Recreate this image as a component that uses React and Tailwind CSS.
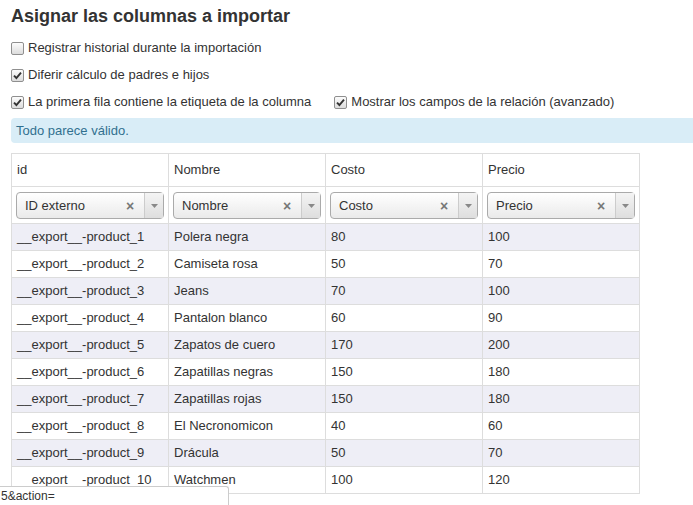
import React from "react";

const rows = [
  ["__export__-product_1", "Polera negra", "80", "100"],
  ["__export__-product_2", "Camiseta rosa", "50", "70"],
  ["__export__-product_3", "Jeans", "70", "100"],
  ["__export__-product_4", "Pantalon blanco", "60", "90"],
  ["__export__-product_5", "Zapatos de cuero", "170", "200"],
  ["__export__-product_6", "Zapatillas negras", "150", "180"],
  ["__export__-product_7", "Zapatillas rojas", "150", "180"],
  ["__export__-product_8", "El Necronomicon", "40", "60"],
  ["__export__-product_9", "Drácula", "50", "70"],
  ["__export__-product_10", "Watchmen", "100", "120"],
];

const Check = ({ checked }) => (
  <span className="inline-flex w-[13px] h-[13px] shrink-0 items-center justify-center rounded-[2px] border border-[#8f8f8f] bg-gradient-to-b from-[#fcfcfc] to-[#dcdcdc]">
    {checked && (
      <svg width="9" height="9" viewBox="0 0 9 9">
        <path d="M1 4.6 L3.4 7 L8 1.6" fill="none" stroke="#333" strokeWidth="1.9" />
      </svg>
    )}
  </span>
);

const Option = ({ checked, label }) => (
  <label className="flex items-center gap-[4px]">
    <Check checked={checked} />
    <span>{label}</span>
  </label>
);

const Select = ({ value }) => (
  <div className="flex h-[27px] items-stretch rounded-[4px] border border-[#aaa] bg-gradient-to-b from-[#ffffff] to-[#eaeaea]">
    <span className="flex-1 pl-[8px] leading-[26px]">{value}</span>
    <span className="flex w-[24px] items-center justify-start pl-[6px] pt-[2px] text-[14px] font-bold text-[#777]">×</span>
    <span className="flex w-[19px] items-center justify-center border-l border-[#ccc] bg-gradient-to-b from-[#f4f4f4] to-[#dedede]">
      <svg width="7" height="4" viewBox="0 0 7 4">
        <path d="M0 0 H7 L3.5 4 Z" fill="#888" />
      </svg>
    </span>
  </div>
);

export default function App() {
  return (
    <div className="relative h-[505px] overflow-hidden bg-white text-[13px] text-[#333] font-['Liberation_Sans',Arial,sans-serif]">
      <div className="pl-[11px] pt-[5px]">
        <h2 className="text-[18px] font-bold leading-[22px] text-[#333]">Asignar las columnas a importar</h2>
        <div className="mt-[13px] flex flex-col gap-[11px] leading-[16px]">
          <Option label="Registrar historial durante la importación" />
          <Option checked label="Diferir cálculo de padres e hijos" />
          <div className="flex gap-[23px]">
            <Option checked label="La primera fila contiene la etiqueta de la columna" />
            <Option checked label="Mostrar los campos de la relación (avanzado)" />
          </div>
        </div>
        <div className="mt-[8px] h-[25px] rounded-l-[4px] bg-[#d9edf7] pl-[5px] leading-[25px] text-[#31708f]">
          Todo parece válido.
        </div>
        <table className="mt-[10px] w-[629px] table-fixed border-collapse">
          <thead>
            <tr className="h-[33px]">
              {["id", "Nombre", "Costo", "Precio"].map((h) => (
                <th key={h} className="border border-[#ddd] px-[5px] text-left font-normal">{h}</th>
              ))}
            </tr>
            <tr className="h-[37px]">
              {["ID externo", "Nombre", "Costo", "Precio"].map((h) => (
                <td key={h} className="border border-[#ddd] px-[4px] pt-[1px]">
                  <Select value={h} />
                </td>
              ))}
            </tr>
          </thead>
          <tbody>
            {rows.map((r, i) => (
              <tr key={i} className={i % 2 === 0 ? "h-[27px] bg-[#eeeef6]" : "h-[27px] bg-white"}>
                {r.map((c, j) => (
                  <td key={j} className="border border-[#ddd] px-[5px]">{c}</td>
                ))}
              </tr>
            ))}
          </tbody>
        </table>
      </div>
      <div className="absolute bottom-0 left-0 h-[19px] w-[229px] rounded-tr-[3px] border-t border-r border-[#ccc] bg-white pl-[1px] text-[12px] leading-[18px] text-[#333]">
        5&amp;action=
      </div>
    </div>
  );
}
